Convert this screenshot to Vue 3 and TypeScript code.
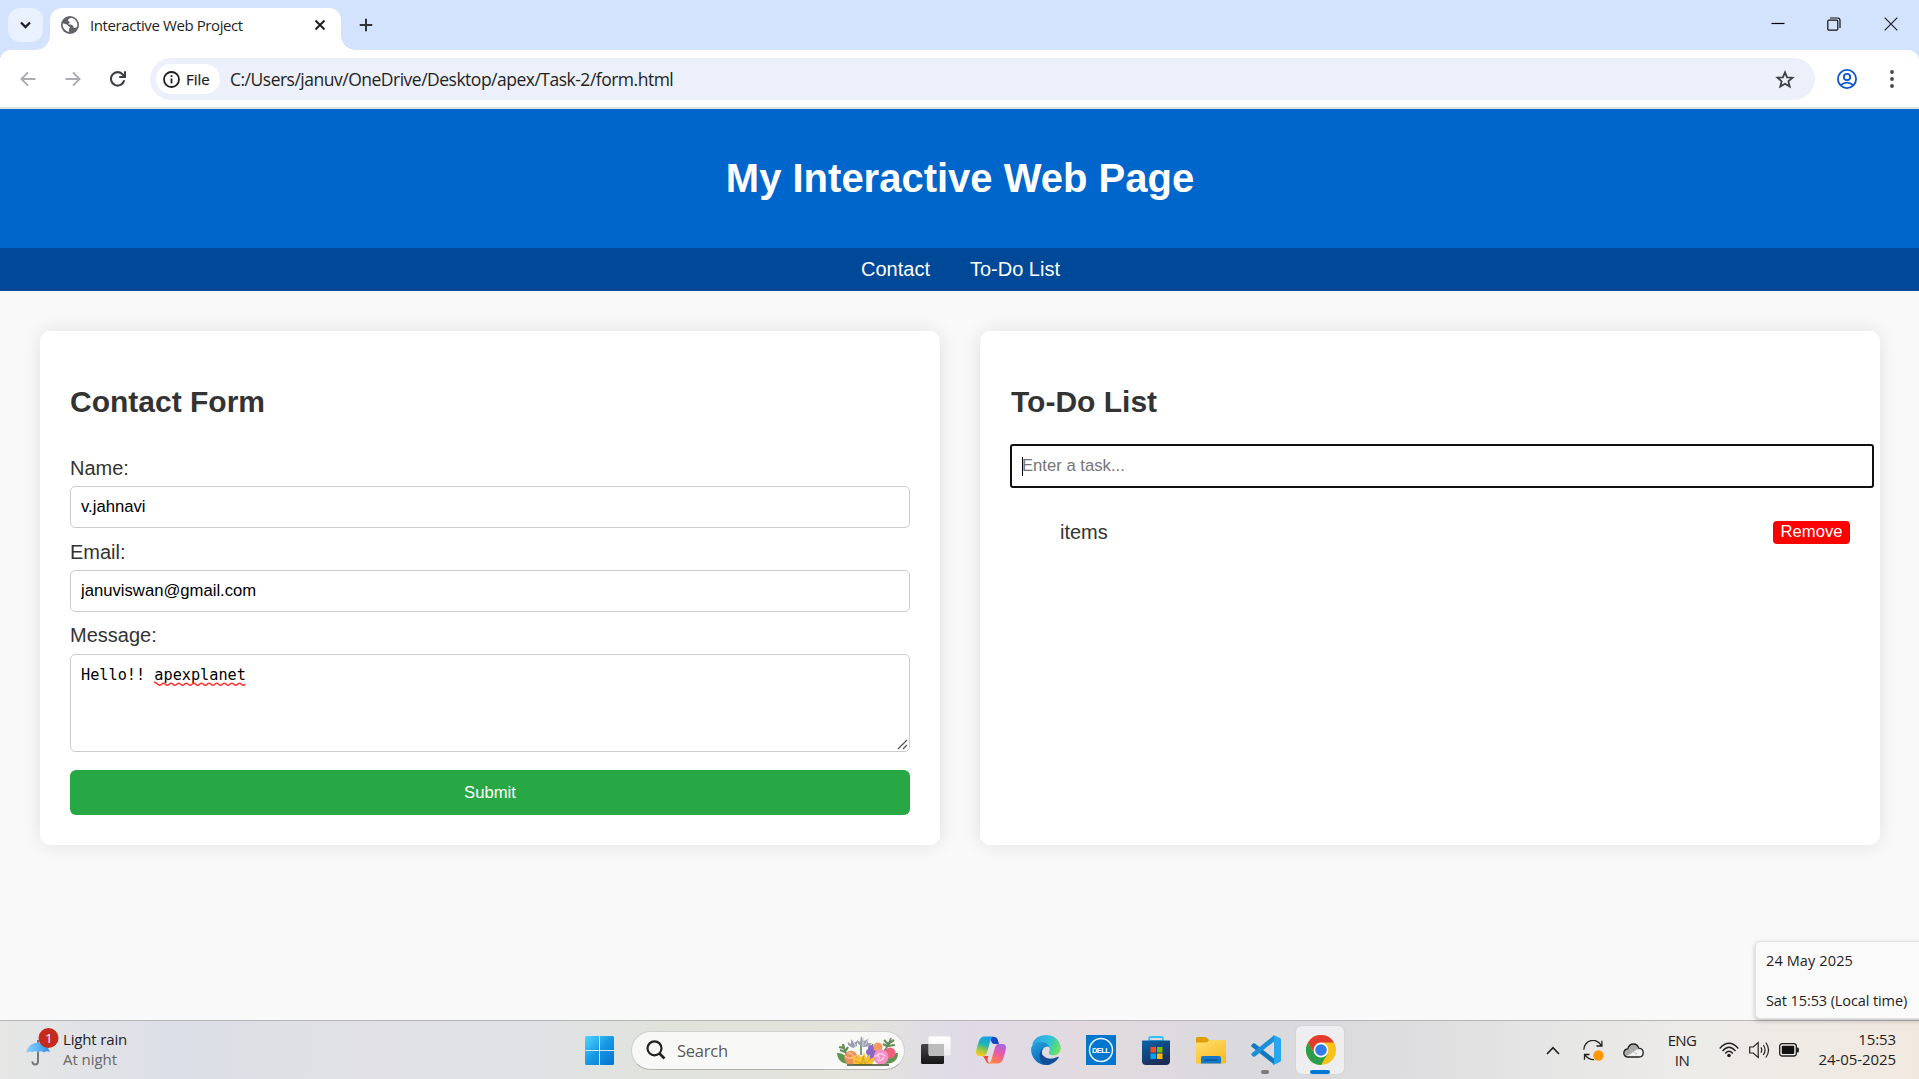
<script setup lang="ts">
import { ref } from 'vue'

interface Field {
  label: string
  value: string
}

const fields = ref<Field[]>([
  { label: 'Name:', value: 'v.jahnavi' },
  { label: 'Email:', value: 'januviswan@gmail.com' },
])
const links = ['Contact', 'To-Do List']
const tasks = ref<string[]>(['items'])

function removeTask(index: number) {
  tasks.value.splice(index, 1)
}
</script>

<template>
  <div class="screen">
    <div class="tabstrip">
      <button class="tab-search" aria-label="Search tabs">
        <svg width="35" height="34" viewBox="0 0 35 34"><path d="M13 14.5l4.5 4.5 4.5-4.5" fill="none" stroke="#1f1f1f" stroke-width="2.3" /></svg>
      </button>
      <div class="tab">
        <svg class="globe" width="18" height="18" viewBox="0 0 18 18">
          <circle cx="9" cy="9" r="9" fill="#5f6368" />
          <path d="M10.5 1.7c-2 .6-3.6 1.5-3.5 2.8.1 1 1.8.8 1.8 1.9 0 .8-1.3.8-1.3 1.7 0 1 2.8.4 4.1 1.3 1.500.9.3 2.300 1.700 2.500.8.2 1.900-.2 2.700-.8A7.300 7.300 0 0 0 10.500 1.700zM1.900 7.300c1.400.6 4.100.7 4.800 1.900.7 1.300 1.800 1.200 2.200 2 .4 1-.8 1.300-1 2.200-.1.900.4 1.700.4 2.600A7.200 7.200 0 0 1 1.900 7.300z" fill="#fff" />
        </svg>
        <span class="tab-title">Interactive Web Project</span>
        <svg width="12" height="12" viewBox="0 0 12 12"><path d="M1.500 1.500l9 9m0-9l-9 9" stroke="#1f1f1f" stroke-width="2" /></svg>
      </div>
      <svg class="plus" width="14" height="14" viewBox="0 0 14 14"><path d="M7 .7v12.600M.7 7h12.600" stroke="#303236" stroke-width="2" /></svg>
      <div class="window-controls">
        <svg width="14" height="14" viewBox="0 0 14 14"><path d="M.5 6.500h13" stroke="#000" stroke-width="1.200" /></svg>
        <svg width="14" height="14" viewBox="0 0 14 14" fill="none" stroke="#111" stroke-width="1.200"><rect x=".8" y="3.200" width="10" height="10" rx="1.200" /><path d="M3 1h7.500q2.500 0 2.500 2.500V11" /></svg>
        <svg width="14" height="14" viewBox="0 0 14 14"><path d="M.7.7l12.600 12.600m0-12.600L.7 13.300" stroke="#222" stroke-width="1.200" /></svg>
      </div>
    </div>

    <div class="toolbar">
      <svg class="nav-icon" width="16" height="16" viewBox="0 0 16 16" fill="none" stroke="#a9abae" stroke-width="1.900"><path d="M15.500 8H1.800M8 1.300L1.400 8 8 14.700" /></svg>
      <svg class="nav-icon" width="16" height="16" viewBox="0 0 16 16" fill="none" stroke="#a9abae" stroke-width="1.900"><path d="M.5 8h13.700M8 1.300L14.600 8 8 14.700" /></svg>
      <svg class="nav-icon" width="16" height="16" viewBox="0 0 16 16" fill="none" stroke="#3c3e41" stroke-width="2.100"><path d="M14.200 9.300A6.700 6.700 0 1 1 13 3.800L14.800 5.800M15 .3v5.700H9.200" /></svg>
      <div class="omnibox">
        <div class="file-chip">
          <svg width="17" height="17" viewBox="0 0 17 17"><circle cx="8.500" cy="8.500" r="7.500" fill="none" stroke="#1f1f1f" stroke-width="1.800" /><path d="M8.500 7.500v5M8.500 4.300v1.800" stroke="#1f1f1f" stroke-width="1.800" /></svg>
          <span>File</span>
        </div>
        <span class="url">C:/Users/januv/OneDrive/Desktop/apex/Task-2/form.html</span>
        <svg class="star" width="20" height="19" viewBox="0 0 20 19"><path d="M10 2.300l2.100 5 5.400.4-4.100 3.600 1.300 5.300L10 13.700l-4.700 2.900 1.300-5.300-4.100-3.600 5.400-.4z" fill="none" stroke="#3f4145" stroke-width="1.800" /></svg>
      </div>
      <svg class="profile" width="20" height="20" viewBox="0 0 20 20" fill="none" stroke="#0b57d0" stroke-width="1.800"><circle cx="10" cy="10" r="9.100" /><circle cx="10" cy="8" r="3.200" /><path d="M3.800 16q6.200-4.800 12.400 0" /></svg>
      <svg width="4" height="20" viewBox="0 0 4 20" fill="#474747"><circle cx="2" cy="3" r="1.900" /><circle cx="2" cy="10" r="1.900" /><circle cx="2" cy="17" r="1.900" /></svg>
    </div>

    <main class="page">
      <header class="banner"><h1>My Interactive Web Page</h1></header>
      <nav class="links"><a v-for="link in links" :key="link">{{ link }}</a></nav>
      <div class="cards">
        <section class="card">
          <h2>Contact Form</h2>
          <template v-for="field in fields" :key="field.label">
            <label>{{ field.label }}</label>
            <input v-model="field.value" class="field" type="text" />
          </template>
          <label class="message-label">Message:</label>
          <div class="field message">
            Hello!! <span class="misspelt">apexplanet<svg class="squiggle" width="92" height="5" viewBox="0 0 92 5"><path d="M0 1.300q1.900 0 3.800 2t3.800 0t3.800 0t3.800 0t3.800 0t3.800 0t3.800 0t3.800 0t3.800 0t3.800 0t3.800 0t3.800 0t3.800 0t3.800 0t3.800 0t3.800 0t3.800 0t3.800 0t3.800 0t3.800 0t3.800 0t3.800 0t3.800 0t3.800 0" fill="none" stroke="#f33" stroke-width="1.400" /></svg></span>
            <svg class="grip" width="11" height="11" viewBox="0 0 11 11"><path d="M1 10L10 1M6 10l4-4" stroke="#555" stroke-width="1.200" /></svg>
          </div>
          <button class="submit">Submit</button>
        </section>
        <section class="card todo">
          <h2>To-Do List</h2>
          <div class="task-input"><span class="caret"></span>Enter a task...</div>
          <ul>
            <li v-for="(task, i) in tasks" :key="task">
              <span>{{ task }}</span>
              <button class="remove" @click="removeTask(i)">Remove</button>
            </li>
          </ul>
        </section>
      </div>
    </main>

    <div class="clock-tip"><span class="tip-date">24 May 2025</span><span class="tip-time">Sat 15:53 (Local time)</span></div>

    <footer class="taskbar">
      <div class="weather">
        <svg width="34" height="40" viewBox="0 0 34 40">
          <defs><linearGradient id="umb" x1="0" y1="0" x2="1" y2="0"><stop offset="0" stop-color="#8fd0fa" /><stop offset=".5" stop-color="#5eb4f8" /><stop offset="1" stop-color="#2f86e0" /></linearGradient></defs>
          <path d="M13 12v21q0 3.500-2.800 3.500T7.400 33.500" fill="none" stroke="#777" stroke-width="2" />
          <path d="M1 24.500Q4 14.500 13 14.500T25 24.500q-3-2.500-6 0-3-2.500-6 0-3-2.500-6 0-2-2-4 0z" fill="url(#umb)" />
          <circle cx="23.500" cy="10" r="10" fill="#c42b1c" />
          <text x="23.800" y="15" fill="#fff" font-size="13.500" text-anchor="middle" font-family="Open Sans, Noto Sans, sans-serif">1</text>
        </svg>
        <div class="weather-text"><span class="rain">Light rain</span><span class="night">At night</span></div>
      </div>

      <div class="apps">
        <div class="app">
          <svg width="29" height="29" viewBox="0 0 29 29">
            <defs><linearGradient id="win" x1="0" y1="0" x2="1" y2="1"><stop offset="0" stop-color="#50d5ff" /><stop offset=".5" stop-color="#1698e4" /><stop offset="1" stop-color="#0471d0" /></linearGradient></defs>
            <path d="M1.500 0H14v14H0V1.500Q0 0 1.500 0zM15 0h12.500Q29 0 29 1.500V14H15zM0 15h14v14H1.500Q0 29 0 27.500zM15 15h14v12.500q0 1.500-1.500 1.500H15z" fill="url(#win)" />
          </svg>
        </div>
        <div class="search">
          <svg width="20" height="20" viewBox="0 0 20 20" fill="none" stroke="#222" stroke-width="2.200"><circle cx="8.500" cy="8.300" r="7" /><path d="M13.500 13.500l5 5" stroke-width="2.600" /></svg>
          <span>Search</span>
          <svg class="flowers" width="62" height="31" viewBox="0 0 62 31">
            <path d="M0 18Q9 17 13 29 1 29 0 18zM61 18q-9-1-14 11 14 0 14-11z" fill="#5f9350" />
            <g fill="none" stroke="#668d59" stroke-width="1.700"><path d="M11 27Q9 15 5 11M46 17q5-5 8-14M24 20V9M31 20l5-11" /><path d="M3 15l5 2 3-5M2 12l5 1-1-4M47 5l4 4 6-4M46 9l4 2 8-1" stroke-width="2.200" /></g>
            <g fill="#9c9fae"><path d="M16 13Q9 10 11 7l3 2 0-5 3 4 3-2v5zM24 11q-5-3-4-6l3 2 1-6 3 5 4-2 0 4 4 0q-3 4-8 4z" /></g>
            <path d="M19 12l-3-7m10 6l0-9m2 8 4-7" stroke="#d8dae2" stroke-width="1" />
            <g fill="#8a67c5"><circle cx="34" cy="13" r="3" /><circle cx="32" cy="17" r="3" /><circle cx="36" cy="18" r="3.500" /><circle cx="34" cy="23" r="4" /></g>
            <circle cx="41" cy="12" r="4.500" fill="#f29861" /><circle cx="14" cy="22.500" r="6.800" fill="#ef8f5c" /><circle cx="53" cy="18" r="5.500" fill="#ee627d" />
            <path d="M8 21q5 5 12-1m-9-1q3-3 6 3" fill="none" stroke="#ffc29a" stroke-width="1.300" />
            <circle cx="44" cy="22" r="7.500" fill="#f58fc6" /><path d="M38 22q5-6 10-1m-8 4q5 2 7-3m-4-4q-4 3 0 5" fill="none" stroke="#ffd2e9" stroke-width="1.400" />
            <path d="M15 20l6 4 0-5 4 4 2-6 2 6 4-4 0 5 5-2-3 8H17z" fill="#f6c432" /><path d="M18 26l7 3 1-8 2 8 6-5" fill="none" stroke="#d59b15" stroke-width=".9" />
            <path d="M10 30h42" stroke="#384828" stroke-width="1.500" />
          </svg>
        </div>
        <div class="app">
          <svg width="30" height="28" viewBox="0 0 30 28">
            <defs><linearGradient id="tv" x2="0" y2="1"><stop stop-color="#474747" /><stop offset="1" stop-color="#161616" /></linearGradient><linearGradient id="tw" x2="0" y2="1"><stop stop-color="#fff" /><stop offset="1" stop-color="#eee" /></linearGradient></defs>
            <rect y="8" width="23" height="20" rx="1.500" fill="url(#tv)" /><rect x="7.500" y=".5" width="22" height="19" rx="1.500" fill="url(#tw)" /><path d="M8 8h15v12H8z" fill="#bcbcbc" />
          </svg>
        </div>
        <div class="app">
          <svg width="30" height="28" viewBox="0 0 30 28">
            <defs>
              <linearGradient id="cpa" x1=".6" y1="0" x2=".3" y2="1"><stop stop-color="#1a9de8" /><stop offset=".4" stop-color="#1cb4b8" /><stop offset=".68" stop-color="#90c64a" /><stop offset="1" stop-color="#ffcb1c" /></linearGradient>
              <linearGradient id="cpb" x1=".7" y1="0" x2=".3" y2="1"><stop stop-color="#a962e8" /><stop offset=".5" stop-color="#ee5b9a" /><stop offset="1" stop-color="#ff8a3c" /></linearGradient>
            </defs>
            <path d="M15 1h3.500q2.500 0 3.300 3l1.200 4h-5q-2 0-3-3z" fill="#1346c4" />
            <path d="M8.500.5H18q-2.500.5-3.500 4L11 16.500Q10 20 7 20H3.500Q0 20 0 15.500 1 10 3 5 4.500.5 8.500.5z" fill="url(#cpa)" />
            <path d="M7 20h5.500l-1 3q0 4 3 4.500h-1q-3 0-4-3.500z" fill="#f04a34" />
            <path d="M23 8h3.500Q30 8 30 12q-1 6-3 11-1.500 4.500-5.500 4.500H12q2.500-.5 3.500-4L19 11.500Q20 8 23 8z" fill="url(#cpb)" />
          </svg>
        </div>
        <div class="app">
          <svg width="30" height="30" viewBox="0 0 30 30">
            <defs><linearGradient id="edg" x1="0" y1=".2" x2="1" y2=".6"><stop stop-color="#2c9fe6" /><stop offset=".55" stop-color="#2fc4d6" /><stop offset="1" stop-color="#6ae35a" /></linearGradient><linearGradient id="edb" x1="0" y1="0" x2=".5" y2="1"><stop stop-color="#2aa3de" /><stop offset="1" stop-color="#0765b8" /></linearGradient></defs>
            <path d="M1 10Q4 0 15 0q9 0 13 7 4 8-1 12-3 2-7 1-3-1-2-3 2-3-1-6Q10 5 1 10z" fill="url(#edg)" />
            <path d="M.2 13Q2 7 9 7q7 0 9.500 5-3-1.500-6 1-4 5 0 10 3 4 8 6Q11 32 4.500 25.500-.5 20 .2 13z" fill="url(#edb)" />
            <path d="M12.500 13q-3.500 4.500 0 8 5 5 14 1 2-1 1 1-4 6-12 7Q8 28 8.500 20q.5-5 4-7z" fill="#124f97" />
          </svg>
        </div>
        <div class="app">
          <svg width="30" height="30" viewBox="0 0 30 30"><path d="M0 0h30v30H0z" fill="#0076ce" /><circle cx="15" cy="15" r="11.500" fill="none" stroke="#eaf5ff" stroke-width="1.500" /><text x="15" y="17.900" fill="#fff" font-size="7.600" font-weight="bold" text-anchor="middle" textLength="18" font-family="Liberation Sans, Arial, sans-serif">DELL</text></svg>
        </div>
        <div class="app">
          <svg width="30" height="30" viewBox="0 0 30 30">
            <defs><linearGradient id="sto" x2=".5" y2="1"><stop stop-color="#0a63ab" /><stop offset="1" stop-color="#1c2e57" /></linearGradient></defs>
            <path d="M8.200 7V3.500Q8.200 2 9.700 2h10.600q1.500 0 1.500 1.500V7" fill="none" stroke="#2fc1f1" stroke-width="1.900" /><path d="M1.500 5.500h27q.5 0 .5.500v20q0 4-4 4H5q-4 0-4-4V6q0-.5.5-.5z" fill="url(#sto)" /><path d="M9.500 5.500h11" stroke="#2f8cc5" stroke-width="1" />
            <path d="M9.500 12H15v5.500H9.500z" fill="#f25022" /><path d="M16 12h5.500v5.500H16z" fill="#7fba00" /><path d="M9.500 18.500H15V24H9.500z" fill="#00a4ef" /><path d="M16 18.500h5.500V24H16z" fill="#ffb900" />
          </svg>
        </div>
        <div class="app">
          <svg width="30" height="28" viewBox="0 0 30 28">
            <defs><linearGradient id="fol" x2=".6" y2="1"><stop stop-color="#ffdf70" /><stop offset="1" stop-color="#f9bd27" /></linearGradient></defs>
            <path d="M0 7V2.500Q0 1 1.500 1H9q1 0 2 1l2 2h15.500Q30 4 30 5.500V9z" fill="#dfa006" /><path d="M0 6.500h10q1 0 2-1l1-1.500h15.500Q30 4 30 5.500V27.500H0z" fill="url(#fol)" /><path d="M5 27.500V22q0-2 2-2h16q2 0 2 2v5.500z" fill="#1478c8" /><path d="M8.500 24h13" stroke="#064e8d" stroke-width="1.200" />
          </svg>
        </div>
        <div class="app">
          <svg width="30" height="30" viewBox="0 0 30 30"><path d="M0 10.500l2-2q1-.7 2 0L23 23.500V29.500L1 12q-1-1-1-1.500z" fill="#1079bd" /><path d="M0 19.500l2 2q1 .7 2 0L23 6.500V.5L1 18q-1 1-1 1.500z" fill="#1a8fd8" /><path d="M21.500.5l1-.5L29 3q1 .6 1 2v20q0 1.400-1 2l-6.500 3-1-.5q1.500.5 1.500-2V2.500q0-2.500-1.500-2z" fill="#28a7f0" /></svg>
          <i class="running"></i>
        </div>
        <div class="app active">
          <svg width="30" height="30" viewBox="0 0 30 30"><circle cx="15" cy="15" r="15" fill="#fbc116" /><path d="M2 7.500L8.500 18.700 15 15V7.500H28A15 15 0 0 0 2 7.500z" fill="#e33b2e" /><path d="M2 7.500A15 15 0 0 0 15 30l6.500-11.300-6.500-1-6.500 1z" fill="#2c9e4b" /><circle cx="15" cy="15" r="7.400" fill="#fff" /><circle cx="15" cy="15" r="5.800" fill="#2f7de9" /></svg>
          <i class="running"></i>
        </div>
      </div>

      <div class="tray">
        <svg class="chevron" width="14" height="9" viewBox="0 0 14 9"><path d="M1 8l6-6.300L13 8" fill="none" stroke="#222" stroke-width="1.700" /></svg>
        <svg class="sync" width="21" height="21" viewBox="0 0 21 21"><path d="M.8 9.700A9.200 9.200 0 0 1 18.200 5.500M18.900.7v5.300H13.500M11 19.600Q5 19.300 1.800 14.800M1.500 19.800v-5.300h5" fill="none" stroke="#222" stroke-width="1.300" /><circle cx="15.500" cy="15.500" r="5.200" fill="#ff9800" /></svg>
        <svg class="cloud" width="21" height="15" viewBox="0 0 21 15"><path d="M4.500 14Q.8 13.500.8 10t4-4.200Q6 1 10.500 1q4.200 0 5.200 4.200 4.500.3 4.500 4.500T16 14z" fill="#aaa" /><path d="M3 13.500L14 6.500q6-1.500 6 3.500T16 14H5z" fill="#f1f1f1" /><path d="M1.500 7Q4 4.500 9 8l5 3" fill="none" stroke="#bbb" stroke-width="1" /><path d="M4.500 14Q.8 13.500.8 10t4-4.200Q6 1 10.500 1q4.200 0 5.200 4.200 4.500.3 4.500 4.500T16 14z" fill="none" stroke="#222" stroke-width="1.300" /></svg>
        <div class="lang"><span>ENG</span><span>IN</span></div>
        <svg class="wifi" width="20" height="16" viewBox="0 0 20 16" fill="none" stroke="#222" stroke-width="1.300"><path d="M.7 6.500Q10-4 19.300 6.500M3.500 9Q10 1.500 16.500 9M6.200 11.500q3.800-4.500 7.600 0" /><circle cx="10" cy="13.500" r="1.800" fill="#222" stroke="none" /></svg>
        <svg class="sound" width="21" height="18" viewBox="0 0 21 18" fill="none" stroke="#222" stroke-width="1.200"><path d="M.7 6h3.500l5-4.500v15L4.200 12H.7zM11.800 6.300q2 2.700 0 5.400M14.300 4q3.500 5 0 10M16.800 1.500q5.500 7.500 0 15" /></svg>
        <svg class="battery" width="20" height="14" viewBox="0 0 20 14"><rect x=".7" y=".7" width="16.600" height="12.300" rx="2.500" fill="none" stroke="#222" stroke-width="1.300" /><rect x="2.800" y="2.800" width="12.400" height="8.100" rx=".8" fill="#111" /><path d="M18 4.500h1q1 0 1 2.500t-1 2.500h-1z" fill="#222" /></svg>
        <div class="clock"><span class="time">15:53</span><span class="date">24-05-2025</span></div>
      </div>
    </footer>
  </div>
</template>

<style>
body { margin: 0; overflow: hidden; }
</style>

<style scoped>
* { box-sizing: border-box; }
svg { display: block; flex: none; }
.screen { position: relative; width: 1919px; height: 1079px; display: flex; flex-direction: column; overflow: hidden; background: #f9f9f9; font-family: "Open Sans", "Noto Sans", sans-serif; color: #1f1f1f; }
.tabstrip { height: 50px; flex: none; display: flex; background: #d3e3fd; }
.tab-search { width: 35px; height: 34px; margin: 8px 7px 0 8px; padding: 0; border: 0; border-radius: 12px; background: #e9f0fe; }
.tab { position: relative; width: 291px; height: 42px; margin-top: 8px; padding: 0 15px 8px 11px; display: flex; align-items: center; border-radius: 12px 12px 0 0; background: #fff; }
.tab::before, .tab::after { content: ""; position: absolute; bottom: 0; width: 14px; height: 14px; }
.tab::before { left: -14px; background: radial-gradient(circle at 0 0, transparent 13.500px, #fff 14px); }
.tab::after { right: -14px; background: radial-gradient(circle at 100% 0, transparent 13.500px, #fff 14px); }
.tab-title { flex: 1; margin-left: 11px; font-size: 15px; letter-spacing: -0.400px; white-space: nowrap; }
.plus { margin: 18px 0 0 18px; }
.window-controls { display: flex; margin: 17px 21px 0 auto; }
.window-controls svg:nth-child(2) { margin: 0 43px 0 42px; }
.toolbar { height: 59px; flex: none; display: flex; align-items: center; padding: 0 25px 0 20px; border-bottom: 2px solid #dfe4e3; background: radial-gradient(circle at 12px 12px, #fff 12px, #d3e3fd 12.500px) 0 0 / 12px 12px no-repeat, radial-gradient(circle at 0 12px, #fff 12px, #d3e3fd 12.500px) 100% 0 / 12px 12px no-repeat, #fff; }
.nav-icon { margin-right: 29px; }
.nav-icon:nth-child(3) { margin-right: 24px; }
.omnibox { width: 1665px; height: 42px; margin-top: 1px; display: flex; align-items: center; padding: 0 20px 0 6px; border-radius: 21px; background: #ecf0fa; }
.file-chip { width: 64px; height: 30px; display: flex; align-items: center; padding-left: 7px; border-radius: 15px; background: #fff; font-size: 15px; font-weight: 500; }
.file-chip span { margin: 0 0 1px 6px; -webkit-text-stroke: .25px #1f1f1f; }
.url { margin-left: 10px; font-size: 17.500px; letter-spacing: -0.500px; white-space: nowrap; }
.star { margin-left: auto; }
.profile { margin: 0 33px 0 22px; }

.page { height: 911px; flex: none; font-family: "Liberation Sans", Arial, sans-serif; color: #333; font-size: 20px; }
.banner { height: 139px; padding-left: 1px; background: #06c; color: #fff; text-align: center; }
h1 { margin: 0; font-size: 40px; line-height: 139px; }
.links { height: 43px; display: flex; justify-content: center; gap: 40px; padding-left: 2px; background: #004999; color: #fff; line-height: 43px; }
.cards { display: flex; gap: 40px; padding: 40px; }
.card { width: 900px; height: 514px; padding: 30px; border-radius: 10px; background: #fff; box-shadow: 0 0 19px rgba(0, 0, 0, .1); display: flex; flex-direction: column; }
h2 { height: 83px; flex: none; margin: 0; font-size: 30px; line-height: 81px; }
.todo h2 { padding-left: 1px; }
label { height: 42px; flex: none; padding-top: 6px; line-height: 37px; }
.message-label { padding-top: 5px; }
.field { width: 840px; height: 42px; flex: none; padding: 0 10px; border: 1px solid #ccc; border-radius: 5px; outline: 0; background: #fff; color: #000; font: 16.667px "Liberation Sans", Arial, sans-serif; }
.message { position: relative; height: 98px; margin-bottom: 18px; padding-top: 10px; font: 15.230px/20px "DejaVu Sans Mono", monospace; }
.misspelt { position: relative; display: inline-block; }
.squiggle { position: absolute; left: 0; top: 16px; }
.grip { position: absolute; right: 1px; bottom: 1px; }
.submit { height: 45px; flex: none; border: 0; border-radius: 6px; background: #28a745; color: #fff; font: 16.667px "Liberation Sans", Arial, sans-serif; }
.task-input { width: 864px; height: 44px; display: flex; align-items: center; padding-left: 10px; border: 2px solid #101010; border-radius: 3px; color: #757575; font-size: 16.667px; }
.caret { width: 1px; height: 19px; margin-right: -1px; background: #000; }
ul { list-style: none; margin: 20px 0 0; padding: 0 0 0 50px; }
li { display: flex; justify-content: space-between; align-items: center; height: 49px; }
.remove { width: 77px; height: 23px; padding: 0 0 2px; border: 0; border-radius: 4px; background: red; color: #fff; font: 16.667px/21px "Liberation Sans", Arial, sans-serif; }

.clock-tip { position: absolute; left: 1755px; top: 941px; width: 172px; height: 78px; display: flex; flex-direction: column; justify-content: space-between; padding: 7px 10px 6px; border: 1px solid #e1e1e1; border-radius: 5px; background: #fafafa; box-shadow: 0 2px 5px rgba(0, 0, 0, .22); font-size: 14.500px; line-height: 23px; white-space: nowrap; z-index: 1; }
.tip-date { letter-spacing: 0.120px; }
.tip-time { letter-spacing: -0.100px; }
.taskbar { position: relative; height: 59px; flex: none; border-top: 1px solid #b5b5b5; display: flex; background: linear-gradient(90deg, #e6e6e5 0, #dcdfe7 9%, #e1e1e4 20%, #dfe1e4 28%, #e0e3dc 34%, #e4e3dc 45%, #dfdbe7 50%, #e2dade 57%, #d9d9de 65%, #dcdcde 72%, #e5e5e5 80%, #ecebe8 88%, #f1e9e0 100%); }
.weather { width: 572px; display: flex; padding: 7px 0 0 25px; }
.weather-text { display: flex; flex-direction: column; margin-left: 4px; padding-top: 1px; font-size: 15px; line-height: 20px; }
.rain { letter-spacing: -0.150px; }
.night { color: #666; letter-spacing: -0.050px; }
.apps { display: flex; align-items: center; }
.app { position: relative; width: 55px; height: 58px; display: flex; align-items: center; justify-content: center; }
.search { width: 274px; height: 39px; margin: 0 3px 0 4px; display: flex; align-items: center; padding: 0 5px 0 14px; border: 1px solid #cfcfcf; border-bottom-color: #b4b4b4; border-radius: 20px; background: #f8f9f7; color: #5a5a5a; font-size: 16.500px; }
.search span { margin-left: 11px; letter-spacing: -0.250px; }
.flowers { margin-left: auto; }
.active::before { content: ""; position: absolute; left: 3px; top: 5px; width: 48px; height: 48px; border-radius: 5px; background: #eeeef0; box-shadow: 0 0 1px #aaa; }
.active svg { position: relative; }
.running { position: absolute; left: 23px; bottom: 5px; width: 8px; height: 4px; border-radius: 2px; background: #7b7b7d; }
.active .running { left: 17px; width: 20px; background: #0078d4; }
.tray { flex: 1; display: flex; align-items: center; padding-right: 23px; justify-content: flex-end; font-size: 15px; line-height: 20px; }
.chevron { margin-right: 23px; }
.sync { margin-right: 19px; }
.cloud { margin-right: 23px; }
.lang { width: 30px; display: flex; flex-direction: column; align-items: center; margin-right: 22px; letter-spacing: -0.600px; }
.wifi { margin-right: 10px; }
.sound { margin-right: 9px; }
.battery { margin-right: 18px; }
.clock { width: 79px; display: flex; flex-direction: column; align-items: flex-end; padding-bottom: 2px; white-space: nowrap; letter-spacing: -0.080px; }
</style>
